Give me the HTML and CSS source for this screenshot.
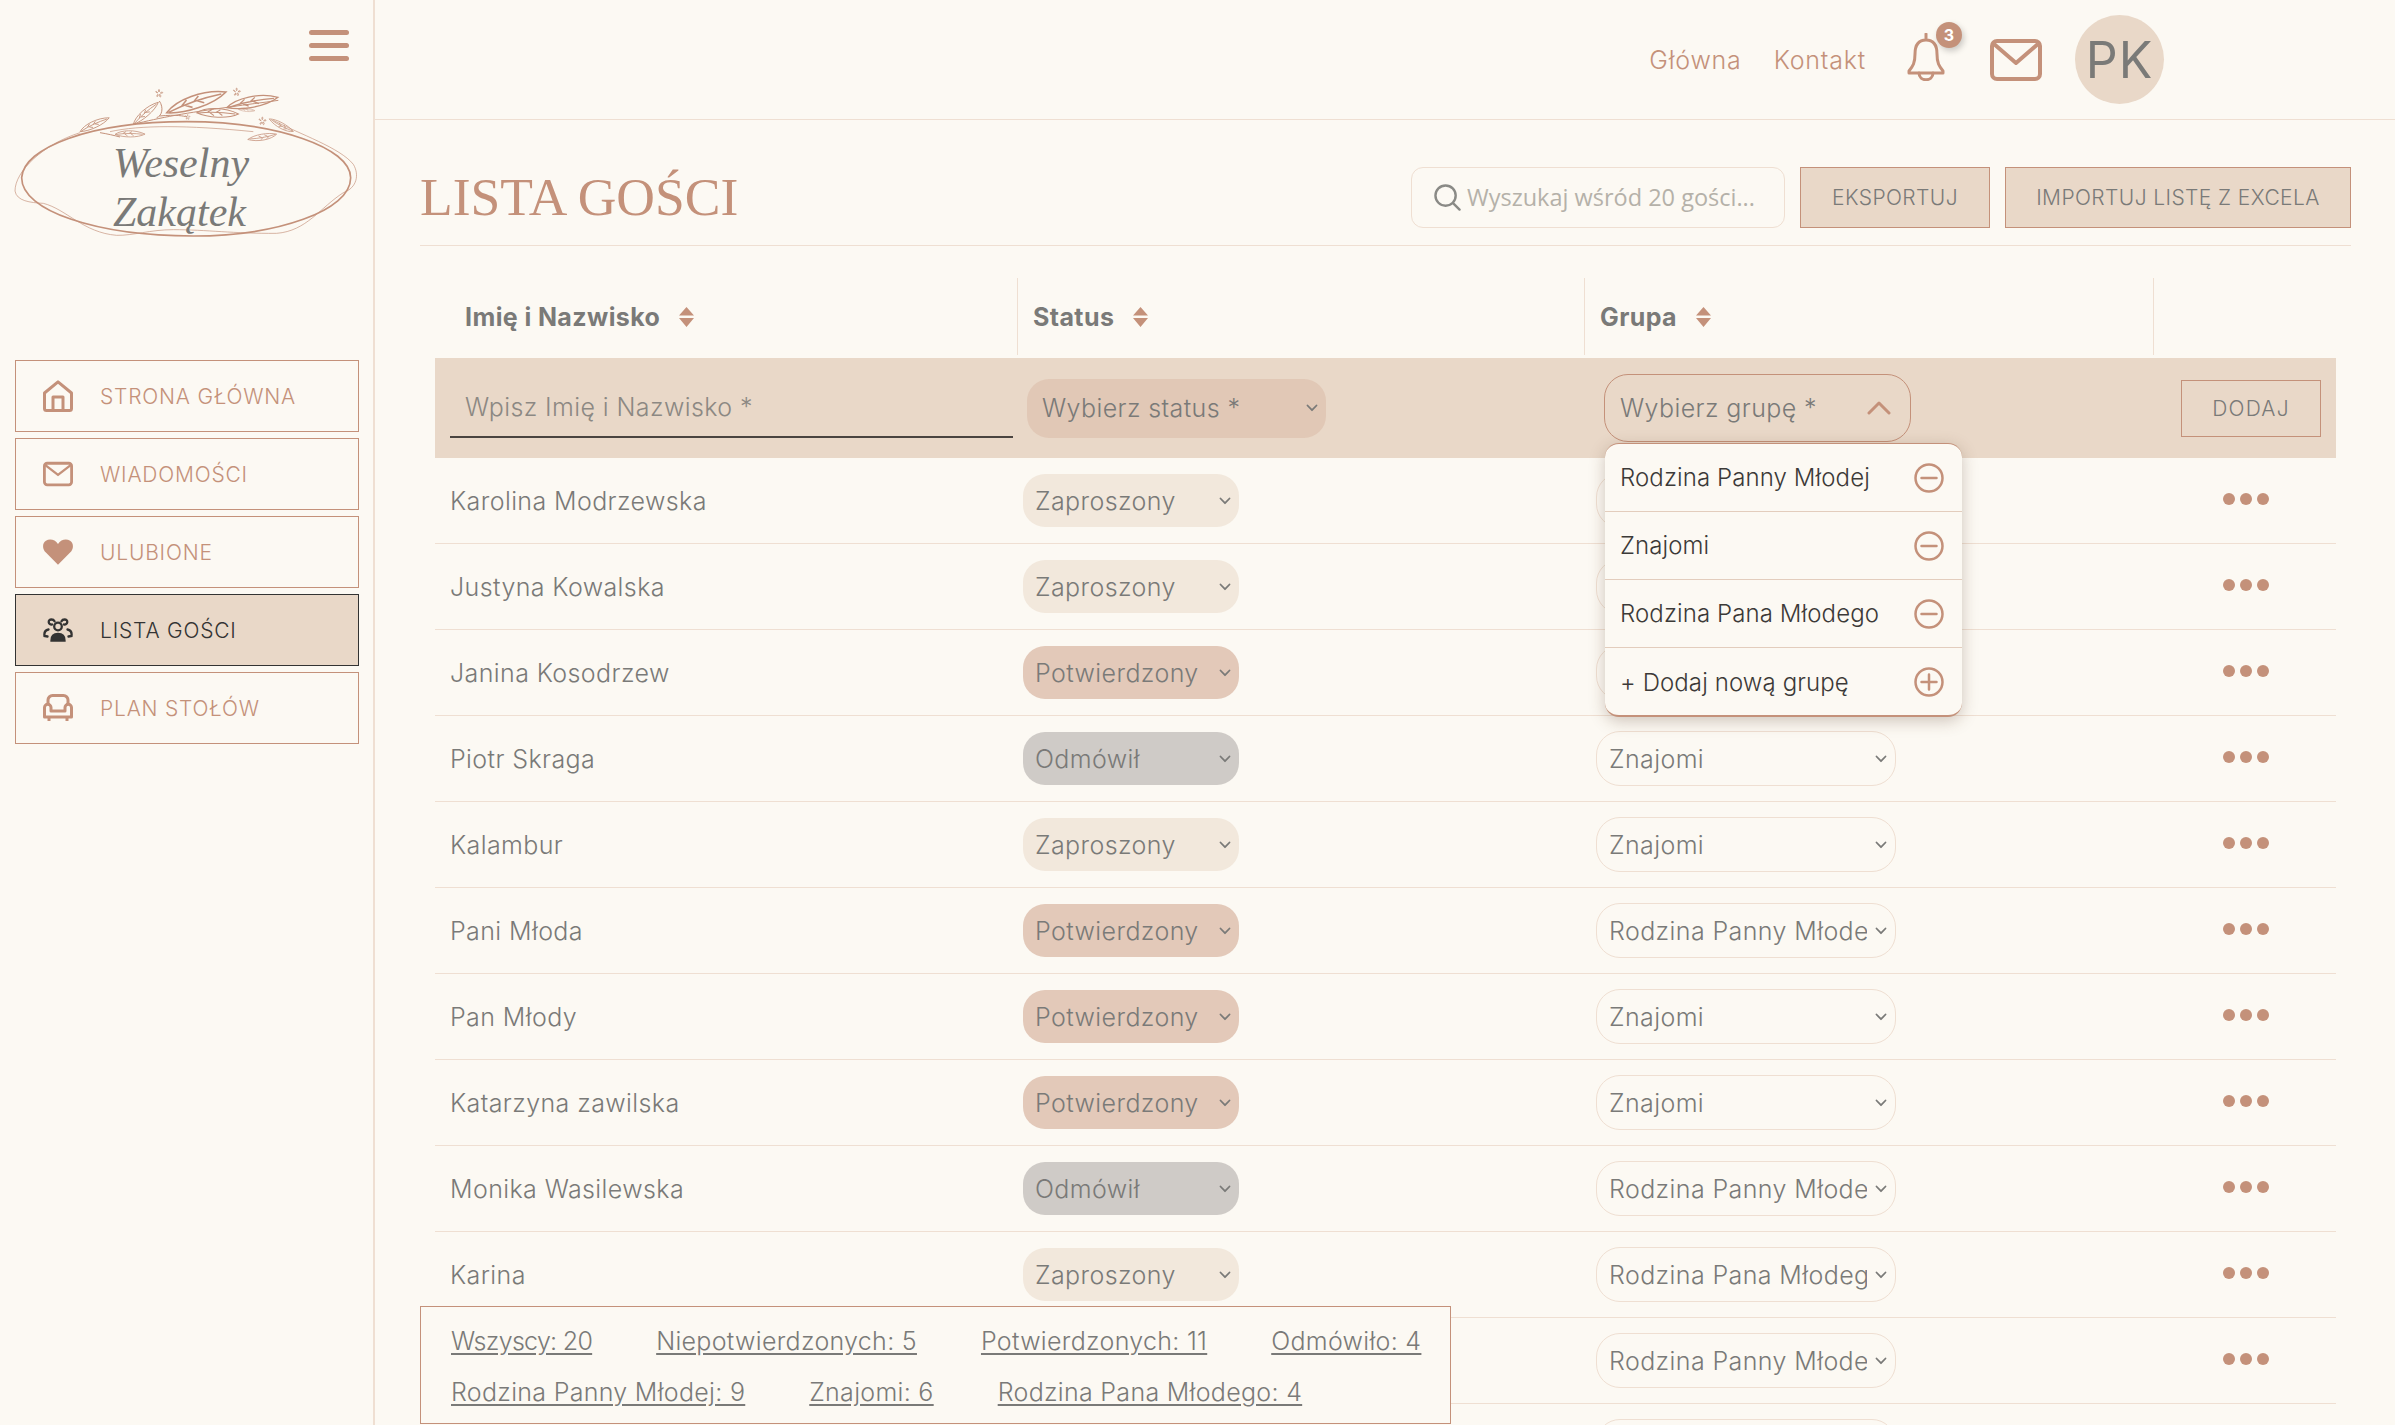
FILE: index.html
```html
<!DOCTYPE html>
<html lang="pl">
<head>
  <meta charset="UTF-8" />
  <title>Lista gości</title>
  <link rel="stylesheet" href="styles.css">
</head>
<body>

  <svg class="sprites" width="0" height="0">
    <symbol id="chev" viewBox="0 0 12 8"><path d="M1.500 1.500 6 6.200l4.500-4.700" fill="none" stroke="currentColor" stroke-width="1.800" stroke-linecap="round" stroke-linejoin="round"/></symbol>
    <symbol id="sort" viewBox="0 0 15 20"><path d="M7.500 0 15 8.500H0zM0 11h15l-7.500 9z"/></symbol>
    <symbol id="leaf" viewBox="0 -30 100 60" overflow="visible"><path d="M0 0C20-16 66-20 100-6 76 8 28 10 0 0ZM4 0C34-6 64-7 92-5M26-4 36-11M46-5 56-12M32-3 42 3M52-5 62 1"/></symbol>
    <symbol id="flower" viewBox="-15 -15 30 30"><path d="M0-4C-5-14 5-14 0-4ZM4-1C12-8 15 2 4-1ZM3 3C10 12 0 14 1 4ZM-3 3C-2 14-12 10-3 3ZM-4-1C-14-4-9-10-4-1Z"/></symbol>
    <symbol id="minus" viewBox="0 0 30 30"><circle cx="15" cy="15" r="13.500" fill="none" stroke="#c4917a" stroke-width="2.500"/><path d="M7.500 15h15" stroke="#c4917a" stroke-width="2.500" stroke-linecap="round"/></symbol>
    <symbol id="plus" viewBox="0 0 30 30"><circle cx="15" cy="15" r="13.500" fill="none" stroke="#c4917a" stroke-width="2.500"/><path d="M7.500 15h15M15 7.500v15" stroke="#c4917a" stroke-width="2.500" stroke-linecap="round"/></symbol>
    <symbol id="mail" viewBox="0 0 32 26"><rect x="1.500" y="1.500" width="29" height="23" rx="3" fill="none" stroke="currentColor" stroke-width="3"/><path d="M2.500 3.500 16 14 29.500 3.500" fill="none" stroke="currentColor" stroke-width="2.500" stroke-linejoin="round"/></symbol>
  </svg>

  <aside class="sidebar">
    <div class="hamburger"><span></span><span></span><span></span></div>

    <div class="logo">
      <svg class="logo-art" viewBox="0 240 1122 480" fill="none" stroke="#c4917a">
        <path stroke-width="5" d="M65 530C70 440 270 362 560 362 830 362 1052 440 1052 530 1052 630 830 705 580 705 290 705 65 630 65 530Z"/>
        <path stroke-width="2" d="M240 395C130 430 45 510 45 570 50 600 90 605 130 607 200 625 250 695 350 703 400 704 450 686 520 686 620 686 700 698 830 697 920 690 960 620 1030 575 1072 560 1078 520 1060 490 1020 440 900 400 820 358M330 392C420 372 560 372 760 392"/>
        <path stroke-width="3" d="M400 370C480 350 560 335 690 318 740 310 790 305 835 298M478 345C530 340 550 345 562 348M478 300C492 320 486 345 470 350M300 395C320 398 345 404 360 408"/>
        <g stroke-width="2.500">
          <use href="#leaf" width="97" height="58" transform="translate(240 392) rotate(-22) translate(0 -29)"/>
          <use href="#leaf" width="100" height="60" transform="translate(400 370) rotate(-38) translate(0 -30)"/>
          <use href="#leaf" width="188" height="113" transform="translate(500 335) rotate(-16) translate(0 -56)"/>
          <use href="#leaf" width="157" height="94" transform="translate(680 320) rotate(-8) translate(0 -47)"/>
          <use href="#leaf" width="125" height="75" transform="translate(590 335) rotate(5) translate(0 -37)"/>
          <use href="#leaf" width="50" height="30" transform="translate(715 325) rotate(8) translate(0 -15)"/>
          <use href="#leaf" width="82" height="49" transform="translate(880 392) rotate(211) translate(0 -24)"/>
          <use href="#leaf" width="88" height="53" transform="translate(830 400) rotate(173) translate(0 -26)"/>
          <use href="#leaf" width="90" height="54" transform="translate(345 400) rotate(3) translate(0 -27)"/>
          <use href="#flower" x="462" y="262" width="30" height="30"/>
          <use href="#flower" x="695" y="258" width="30" height="30"/>
          <use href="#flower" x="772" y="345" width="30" height="30"/>
          <use href="#flower" x="553" y="338" width="20" height="20"/>
        </g>
      </svg>
      <div class="logo-name">Weselny<br>Zakątek</div>
    </div>

    <nav class="menu">
      <a class="menu-item" href="#">
        <svg viewBox="0 0 30 32" fill="none" stroke="currentColor" stroke-width="3" stroke-linejoin="round"><path d="M1.500 13 15 1.800 28.500 13v15.500a2 2 0 0 1-2 2h-23a2 2 0 0 1-2-2z"/><path d="M10 30V17h10v13"/></svg>
        STRONA GŁÓWNA
      </a>
      <a class="menu-item" href="#">
        <svg class="menu-mail"><use href="#mail"/></svg>
        WIADOMOŚCI
      </a>
      <a class="menu-item" href="#">
        <svg viewBox="0 0 26 22" fill="currentColor"><path d="M13 22 2.500 11.500C-1 8-.5 3 2.500 1.200 6-.8 10.500.2 13 4c2.500-3.800 7-4.800 10.500-2.800 3 1.800 3.500 6.800 0 10.300z"/></svg>
        ULUBIONE
      </a>
      <a class="menu-item active" href="#">
        <svg viewBox="0 0 30 24" fill="none" stroke="currentColor" stroke-width="2.300" stroke-linecap="round"><circle cx="15" cy="8.500" r="3.800"/><path d="M8.500 22.500c0-4.500 2.500-6.500 6.500-6.500s6.500 2 6.500 6.500z" fill="currentColor"/><path d="M9 6.500C5 7 4.500 1.500 8.500 1.500c1.500 0 2.500.8 3 1.800M21 6.500c4 .5 4.500-5 .5-5-1.500 0-2.500.8-3 1.800M5.500 11.500c-3 .5-4.500 3-4 6.500l3 .5M24.500 11.500c3 .5 4.500 3 4 6.500l-3 .5"/></svg>
        LISTA GOŚCI
      </a>
      <a class="menu-item" href="#">
        <svg viewBox="0 0 30 28" fill="none" stroke="currentColor" stroke-width="3" stroke-linejoin="round"><path d="M5 11V6a4.500 4.500 0 0 1 4.500-4.500h11A4.500 4.500 0 0 1 25 6v5"/><path d="M8 17v-3.500a3.250 3.250 0 0 0-6.500 0V23h27v-9.500a3.250 3.250 0 0 0-6.500 0V17z"/><path d="M6 24v3M24 24v3"/></svg>
        PLAN STOŁÓW
      </a>
    </nav>
  </aside>

  <main class="main">
    <header class="topbar">
      <a class="top-link" href="#">Główna</a>
      <a class="top-link" href="#">Kontakt</a>
      <div class="bell">
        <svg viewBox="0 0 38 48" fill="none" stroke="#c4917a" stroke-width="3" stroke-linejoin="round" stroke-linecap="round"><path d="M19 1v6M19 7c-8 0-11 6-11 14 0 9-2 12-6 17v2h34v-2c-4-5-6-8-6-17 0-8-3-14-11-14z"/><path d="M12 40c0 9 14 9 14 0"/></svg>
        <span class="badge">3</span>
      </div>
      <svg class="top-mail" viewBox="0 0 52 42" fill="none" stroke="#c4917a" stroke-width="4" stroke-linejoin="round"><rect x="2" y="2" width="48" height="38" rx="5"/><path d="M4 5 26 24 48 5"/></svg>
      <div class="avatar">PK</div>
    </header>

    <section class="content">
      <div class="title-row">
        <h1>LISTA GOŚCI</h1>
        <div class="search">
          <svg viewBox="0 0 28 28" fill="none" stroke="#8a8a86" stroke-width="2.500" stroke-linecap="round"><circle cx="12" cy="12" r="10.500"/><path d="m20 20 6.500 6.500"/></svg>
          <input type="text" placeholder="Wyszukaj wśród 20 gości...">
        </div>
        <button class="btn">EKSPORTUJ</button>
        <button class="btn btn-wide">IMPORTUJ LISTĘ Z EXCELA</button>
      </div>

      <div class="table">
        <div class="row head">
          <div class="th th-name">Imię i Nazwisko <svg class="sort"><use href="#sort"/></svg></div>
          <div class="th">Status <svg class="sort"><use href="#sort"/></svg></div>
          <div class="th">Grupa <svg class="sort"><use href="#sort"/></svg></div>
          <div class="th th-last"></div>
        </div>

        <div class="row add-row">
          <div class="add-name"><input type="text" placeholder="Wpisz Imię i Nazwisko *"></div>
          <div class="add-status"><div class="pick"><span>Wybierz status *</span><svg class="chev"><use href="#chev"/></svg></div></div>
          <div class="add-group">
            <div class="group-pick">
              <span>Wybierz grupę *</span>
              <svg class="chev-up" viewBox="0 0 24 14" fill="none" stroke="#c4917a" stroke-width="3" stroke-linecap="round" stroke-linejoin="round"><path d="M2 12 12 2l10 10"/></svg>
              <ul class="dropdown">
                <li>Rodzina Panny Młodej <svg><use href="#minus"/></svg></li>
                <li>Znajomi <svg><use href="#minus"/></svg></li>
                <li>Rodzina Pana Młodego <svg><use href="#minus"/></svg></li>
                <li>+ Dodaj nową grupę <svg><use href="#plus"/></svg></li>
              </ul>
            </div>
          </div>
          <div class="add-btn"><button class="btn-add">DODAJ</button></div>
        </div>

        <div class="row guest"><div class="name">Karolina Modrzewska</div><div class="status"><div class="pill invited"><span>Zaproszony</span><svg class="chev"><use href="#chev"/></svg></div></div><div class="group"><div class="pill grp"></div></div><div class="more"><i></i><i></i><i></i></div></div>
        <div class="row guest"><div class="name">Justyna Kowalska</div><div class="status"><div class="pill invited"><span>Zaproszony</span><svg class="chev"><use href="#chev"/></svg></div></div><div class="group"><div class="pill grp"></div></div><div class="more"><i></i><i></i><i></i></div></div>
        <div class="row guest"><div class="name">Janina Kosodrzew</div><div class="status"><div class="pill confirmed"><span>Potwierdzony</span><svg class="chev"><use href="#chev"/></svg></div></div><div class="group"><div class="pill grp"></div></div><div class="more"><i></i><i></i><i></i></div></div>
        <div class="row guest"><div class="name">Piotr Skraga</div><div class="status"><div class="pill refused"><span>Odmówił</span><svg class="chev"><use href="#chev"/></svg></div></div><div class="group"><div class="pill grp"><span>Znajomi</span><svg class="chev"><use href="#chev"/></svg></div></div><div class="more"><i></i><i></i><i></i></div></div>
        <div class="row guest"><div class="name">Kalambur</div><div class="status"><div class="pill invited"><span>Zaproszony</span><svg class="chev"><use href="#chev"/></svg></div></div><div class="group"><div class="pill grp"><span>Znajomi</span><svg class="chev"><use href="#chev"/></svg></div></div><div class="more"><i></i><i></i><i></i></div></div>
        <div class="row guest"><div class="name">Pani Młoda</div><div class="status"><div class="pill confirmed"><span>Potwierdzony</span><svg class="chev"><use href="#chev"/></svg></div></div><div class="group"><div class="pill grp"><span>Rodzina Panny Młodej</span><svg class="chev"><use href="#chev"/></svg></div></div><div class="more"><i></i><i></i><i></i></div></div>
        <div class="row guest"><div class="name">Pan Młody</div><div class="status"><div class="pill confirmed"><span>Potwierdzony</span><svg class="chev"><use href="#chev"/></svg></div></div><div class="group"><div class="pill grp"><span>Znajomi</span><svg class="chev"><use href="#chev"/></svg></div></div><div class="more"><i></i><i></i><i></i></div></div>
        <div class="row guest"><div class="name">Katarzyna zawilska</div><div class="status"><div class="pill confirmed"><span>Potwierdzony</span><svg class="chev"><use href="#chev"/></svg></div></div><div class="group"><div class="pill grp"><span>Znajomi</span><svg class="chev"><use href="#chev"/></svg></div></div><div class="more"><i></i><i></i><i></i></div></div>
        <div class="row guest"><div class="name">Monika Wasilewska</div><div class="status"><div class="pill refused"><span>Odmówił</span><svg class="chev"><use href="#chev"/></svg></div></div><div class="group"><div class="pill grp"><span>Rodzina Panny Młodej</span><svg class="chev"><use href="#chev"/></svg></div></div><div class="more"><i></i><i></i><i></i></div></div>
        <div class="row guest"><div class="name">Karina</div><div class="status"><div class="pill invited"><span>Zaproszony</span><svg class="chev"><use href="#chev"/></svg></div></div><div class="group"><div class="pill grp"><span>Rodzina Pana Młodego</span><svg class="chev"><use href="#chev"/></svg></div></div><div class="more"><i></i><i></i><i></i></div></div>
        <div class="row guest"><div class="name"></div><div class="status"></div><div class="group"><div class="pill grp"><span>Rodzina Panny Młodej</span><svg class="chev"><use href="#chev"/></svg></div></div><div class="more"><i></i><i></i><i></i></div></div>
        <div class="row guest"><div class="name"></div><div class="status"></div><div class="group"><div class="pill grp"></div></div><div class="more"></div></div>
      </div>
    </section>

    <div class="stats">
      <div class="stats-line">
        <a class="stats-all" href="#">Wszyscy: 20</a>
        <a href="#">Niepotwierdzonych: 5</a>
        <a href="#">Potwierdzonych: 11</a>
        <a href="#">Odmówiło: 4</a>
      </div>
      <div class="stats-line">
        <a href="#">Rodzina Panny Młodej: 9</a>
        <a href="#">Znajomi: 6</a>
        <a href="#">Rodzina Pana Młodego: 4</a>
      </div>
    </div>
  </main>

</body>
</html>
```

FILE: styles.css
```css
* {
  box-sizing: border-box;
}

body {
  margin: 0;
  height: 100vh;
  overflow: hidden;
  display: flex;
  background: #fcf9f3;
  color: #7a7a78;
  font-family: 'Inter', 'Liberation Sans', sans-serif;
  font-weight: 300;
  font-size: 25px;
  letter-spacing: 0.4px;
}

.sprites {
  position: absolute;
}

a {
  color: inherit;
  text-decoration: none;
}

/* sidebar */

.sidebar {
  width: 375px;
  flex-shrink: 0;
  border-right: 2px solid #efdfd2;
  padding: 30px 15px 0;
}

.hamburger {
  width: 40px;
  margin-left: auto;
  margin-right: 9px;
  display: flex;
  flex-direction: column;
  gap: 8px;
}

.hamburger span {
  height: 5px;
  border-radius: 3px;
  background: #c4917a;
}

.logo {
  position: relative;
  height: 160px;
  margin: 20px -15px 0;
}

.logo-art {
  position: absolute;
  top: 0;
  left: 0;
  width: 374px;
  height: 160px;
}

.logo-name {
  position: absolute;
  top: 58px;
  left: 113px;
  font-family: 'Liberation Serif', serif;
  font-style: italic;
  font-size: 42px;
  line-height: 49px;
  letter-spacing: 0;
  color: #7a7a78;
}

.menu {
  margin-top: 119px;
  display: flex;
  flex-direction: column;
  gap: 6px;
}

.menu-item {
  width: 344px;
  height: 72px;
  display: flex;
  align-items: center;
  gap: 27px;
  padding-left: 27px;
  border: 1px solid #c4917a;
  color: #c4917a;
  font-size: 21px;
  letter-spacing: 0.8px;
}

.menu-item svg {
  width: 30px;
  height: 32px;
  flex-shrink: 0;
}

.menu-item.active {
  background: #e9d8c8;
  border-color: #333;
  color: #333;
}

/* top bar */

.main {
  position: relative;
  flex: 1;
  min-width: 0;
}

.topbar {
  height: 120px;
  display: flex;
  align-items: center;
  justify-content: flex-end;
  padding-right: 231px;
  border-bottom: 1px solid #efdfd2;
}

.top-link {
  color: #c4917a;
  font-size: 25px;
  letter-spacing: 0.8px;
  margin-right: 32px;
}

.bell {
  position: relative;
  width: 38px;
  height: 48px;
  margin: -6px 0 0 9px;
}

.badge {
  position: absolute;
  top: -11px;
  left: 29px;
  width: 26px;
  height: 26px;
  border-radius: 50%;
  background: #c4917a;
  color: #fff;
  font-size: 16px;
  font-weight: 700;
  line-height: 26px;
  letter-spacing: 0;
  text-align: center;
  box-shadow: 2px 3px 6px rgba(0, 0, 0, 0.2);
}

.top-mail {
  width: 52px;
  height: 42px;
  margin: 0 33px 0 45px;
}

.avatar {
  width: 89px;
  height: 89px;
  border-radius: 50%;
  background: #e9d8c8;
  display: flex;
  align-items: center;
  justify-content: center;
  font-size: 50px;
  font-weight: 400;
  letter-spacing: 1px;
}

/* title + actions */

.content {
  padding: 0 44px 0 45px;
}

.title-row {
  height: 126px;
  padding-top: 47px;
  padding-bottom: 18px;
  display: flex;
  align-items: center;
  border-bottom: 1px solid #efdfd2;
}

h1 {
  margin: 0 auto 0 0;
  font-family: 'Liberation Serif', serif;
  font-size: 53.5px;
  font-weight: 400;
  letter-spacing: 0;
  color: #c4917a;
}

.search {
  width: 374px;
  height: 61px;
  display: flex;
  align-items: center;
  gap: 4px;
  padding-left: 22px;
  border: 1px solid #efdfd2;
  border-radius: 12px;
}

.search svg {
  width: 27px;
  height: 27px;
  flex-shrink: 0;
}

.search input {
  width: 310px;
  border: 0;
  outline: 0;
  background: none;
  font-family: 'Open Sans', sans-serif;
  font-size: 23.5px;
}

.search input::placeholder {
  color: #b5b1a9;
  opacity: 1;
}

.btn {
  width: 190px;
  height: 61px;
  margin-left: 15px;
  background: #e9d8c8;
  border: 1px solid #c4917a;
  font-family: inherit;
  font-size: 21px;
  font-weight: 300;
  letter-spacing: 0.4px;
  color: #7a7a78;
}

.btn-wide {
  width: 346px;
}

/* table */

.table {
  margin-top: 32px;
  padding: 0 15px;
}

.row {
  display: grid;
  grid-template-columns: 583px 567px 569px 182px;
}

.head {
  height: 80px;
}

.th {
  height: 77px;
  display: flex;
  align-items: center;
  padding-left: 15px;
  border-right: 1px solid #efdfd2;
  font-weight: 700;
}

.th-name {
  padding-left: 30px;
}

.th-last {
  border-right: 0;
}

.sort {
  width: 15px;
  height: 20px;
  margin-left: 19px;
  fill: #c4917a;
}

.add-row {
  height: 100px;
  align-items: center;
  background: #e9d8c8;
}

.add-name {
  padding: 0 5px 0 15px;
}

.add-name input {
  width: 100%;
  height: 60px;
  padding: 0 0 0 15px;
  border: 0;
  border-bottom: 2px solid #4a4440;
  outline: 0;
  background: none;
  font-family: inherit;
  font-size: 25px;
  font-weight: 300;
  letter-spacing: 0.4px;
}

.add-name input::placeholder {
  color: #8c8883;
  opacity: 1;
}

.add-status {
  padding-left: 9px;
}

.pick {
  width: 299px;
  height: 59px;
  display: flex;
  align-items: center;
  justify-content: space-between;
  padding: 0 8px 0 15px;
  border-radius: 22px;
  background: #e1c8b6;
}

.add-group {
  padding-left: 19px;
}

.group-pick {
  position: relative;
  width: 307px;
  height: 68px;
  display: flex;
  align-items: center;
  justify-content: space-between;
  padding: 0 19px 0 15px;
  border: 1px solid #c4917a;
  border-radius: 24px;
}

.chev-up {
  width: 24px;
  height: 14px;
}

.dropdown {
  position: absolute;
  z-index: 5;
  top: 68px;
  left: 0;
  width: 357px;
  height: 274px;
  margin: 0;
  padding: 0;
  list-style: none;
  background: #fcf9f3;
  border-top: 1px solid #c4917a;
  border-bottom: 2px solid #c4917a;
  border-radius: 14px;
  box-shadow: 0 4px 16px rgba(90, 60, 40, 0.28);
  color: #3c3a38;
  font-size: 24px;
  letter-spacing: 0.1px;
}

.dropdown li {
  height: 68px;
  display: flex;
  align-items: center;
  justify-content: space-between;
  padding: 0 18px 0 15px;
  border-bottom: 1px solid #e3cdbd;
}

.dropdown li:last-child {
  border-bottom: 0;
}

.dropdown svg {
  width: 30px;
  height: 30px;
}

.guest {
  height: 86px;
  align-items: center;
  border-bottom: 1px solid #efdfd2;
}

.name {
  padding-left: 15px;
}

.status {
  padding-left: 5px;
}

.group {
  padding-left: 11px;
}

.pill {
  display: flex;
  align-items: center;
  gap: 8px;
  padding: 0 8px 0 12px;
}

.pill span {
  flex: 1;
  min-width: 0;
  overflow: hidden;
  white-space: nowrap;
}

.chev, .pick svg {
  width: 12px;
  height: 8px;
  flex-shrink: 0;
}

.invited, .confirmed, .refused {
  width: 216px;
  height: 53px;
  border-radius: 22px;
}

.invited { background: #f2e8dc; }
.confirmed { background: #e3c9b9; }
.refused { background: #cfcbc7; }

.grp {
  width: 300px;
  height: 55px;
  border: 1px solid #efdfd2;
  border-radius: 24px;
}

.more {
  display: flex;
  gap: 5px;
  padding-left: 69px;
  margin-top: -4px;
}

.more i {
  width: 12px;
  height: 12px;
  border-radius: 50%;
  background: #c4917a;
}

.add-btn {
  padding-left: 27px;
}

.btn-add {
  width: 140px;
  height: 57px;
  background: none;
  border: 1px solid #c4917a;
  font-family: inherit;
  font-size: 21px;
  font-weight: 300;
  letter-spacing: 1.2px;
  color: #7a7a78;
}

/* counters over the table */

.stats {
  position: absolute;
  z-index: 3;
  left: 45px;
  bottom: 1px;
  width: 1031px;
  height: 118px;
  padding: 8px 30px 0;
  background: #fcf9f3;
  border: 1px solid #c4917a;
  letter-spacing: 0.3px;
}

.stats-line {
  display: flex;
  gap: 64px;
  height: 51px;
  align-items: center;
  white-space: nowrap;
}

.stats a {
  text-decoration: underline;
  text-underline-offset: 3px;
}

.stats .stats-all {
  letter-spacing: -0.7px;
}
```
